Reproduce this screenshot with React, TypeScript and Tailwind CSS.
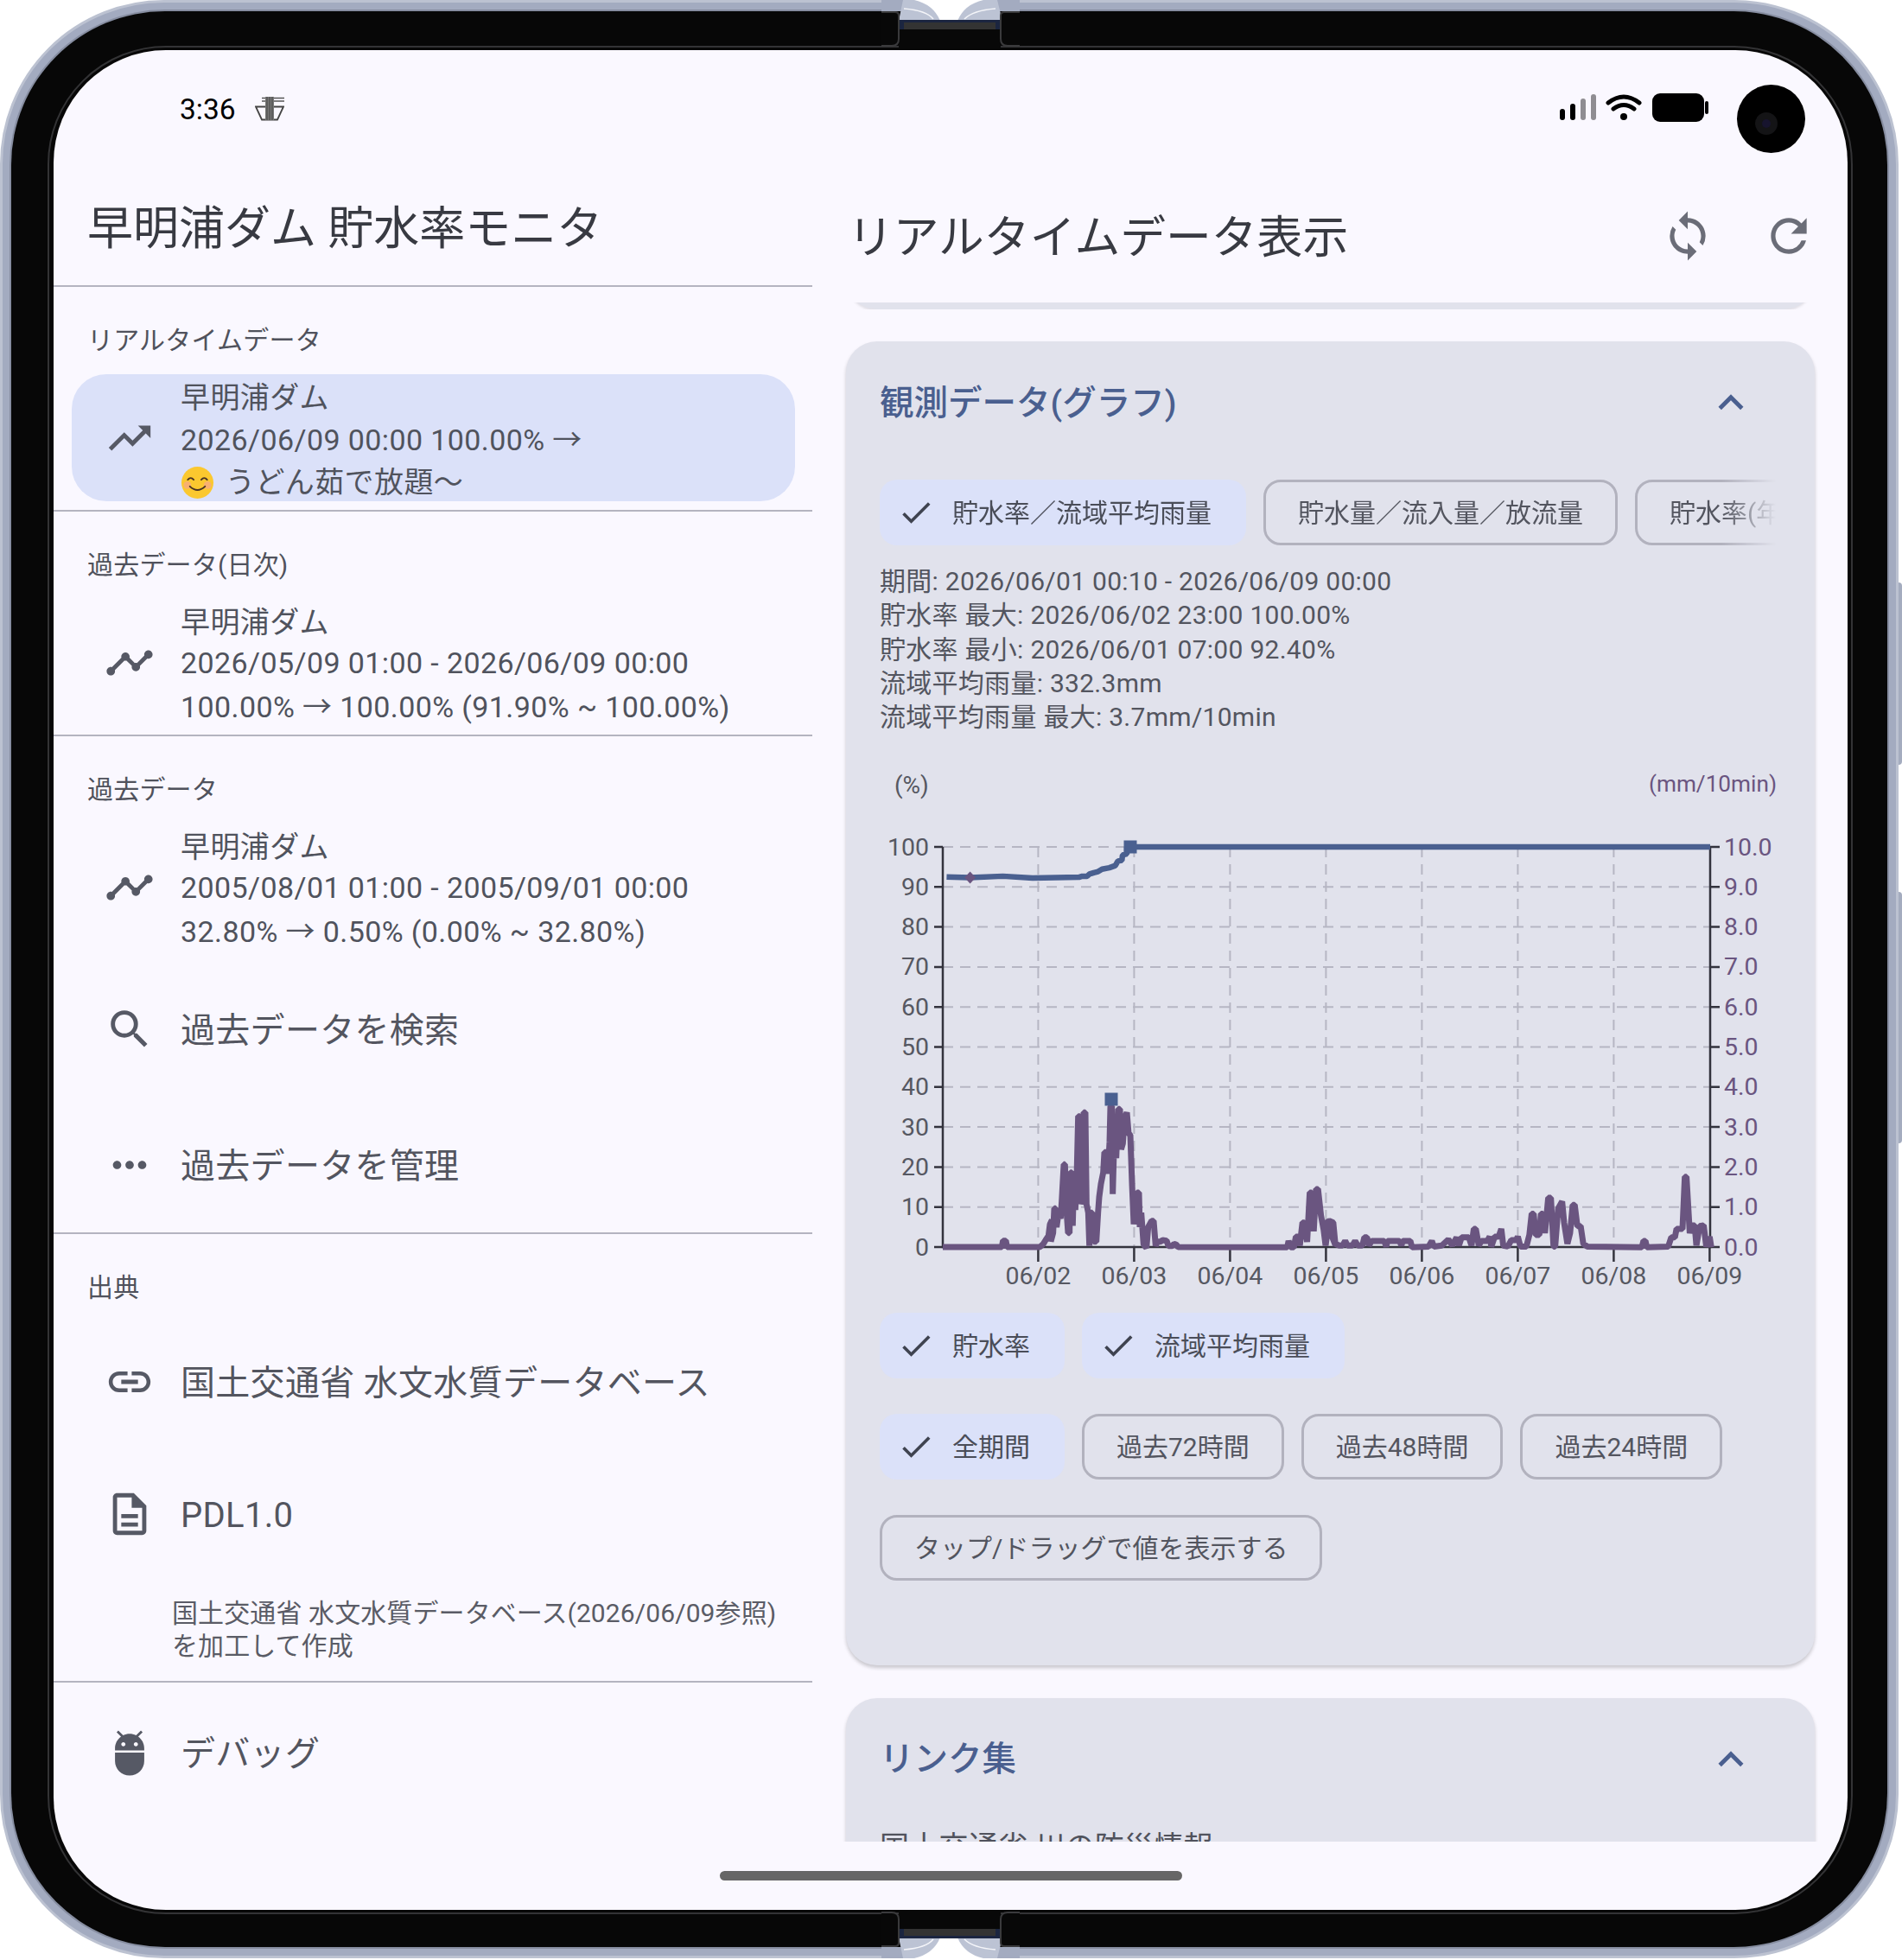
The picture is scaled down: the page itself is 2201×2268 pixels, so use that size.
import type { ReactNode } from "react";
import {
  MdAdb,
  MdCheck,
  MdKeyboardArrowUp,
  MdLink,
  MdMoreHoriz,
  MdOutlineDescription,
  MdRefresh,
  MdSearch,
  MdSync,
  MdTimeline,
  MdTrendingUp,
} from "react-icons/md";

// traced from the chart, separate crops so separate scales
const rainA: number[][] = [
  [273, 639], [478, 639], [482, 617], [492, 617], [496, 639], [610, 639], [622, 628], [630, 615], [640, 600], [645, 560], [652, 545], [648, 620], [656, 590], [660, 505], [665, 505], [668, 570], [675, 520], [682, 540], [686, 480], [693, 352], [697, 352], [703, 520], [708, 590], [713, 590], [716, 380], [721, 380], [724, 565], [728, 405], [733, 510], [738, 400], [743, 185], [749, 185], [752, 490], [758, 470], [762, 172], [768, 172], [772, 490], [778, 520], [782, 635], [787, 520], [792, 520], [797, 620], [806, 620], [812, 520], [816, 465], [822, 420], [830, 380], [834, 310], [840, 310], [846, 385], [852, 275], [855, 150], [860, 150], [863, 455], [868, 270], [875, 330], [882, 160], [888, 160], [892, 300], [898, 280], [904, 190], [912, 172], [918, 245], [924, 250], [930, 420], [936, 560], [942, 480], [947, 450], [954, 450], [957, 570], [962, 520], [970, 630], [980, 642], [986, 570], [998, 548], [1005, 548], [1012, 635], [1018, 620], [1030, 620], [1036, 615], [1050, 617], [1056, 635], [1070, 635], [1076, 628], [1083, 630], [1090, 639],
];
const rainB: number[][] = [
  [1400, 1380], [1410, 1380], [1414, 1362], [1420, 1380], [1430, 1380], [1436, 1350], [1442, 1350], [1448, 1375], [1456, 1310], [1462, 1310], [1470, 1365], [1478, 1225], [1484, 1225], [1490, 1335], [1497, 1215], [1503, 1215], [1512, 1290], [1520, 1330], [1526, 1375], [1535, 1310], [1548, 1310], [1556, 1375],
];
const rainC: number[][] = [
  [92, 1310], [100, 1305], [112, 1310], [118, 1370], [130, 1375], [140, 1375], [148, 1362], [155, 1375], [170, 1375], [178, 1362], [186, 1375], [200, 1375], [206, 1352], [214, 1352], [220, 1375], [228, 1362], [266, 1362], [272, 1378], [276, 1362], [312, 1362], [318, 1375], [322, 1362], [345, 1362], [350, 1380], [400, 1378], [410, 1362], [416, 1378], [440, 1375], [460, 1358], [472, 1375], [485, 1352], [492, 1375], [500, 1352], [522, 1352], [530, 1375], [537, 1328], [543, 1328], [552, 1375], [560, 1362], [578, 1362], [585, 1350], [590, 1378], [600, 1350], [612, 1350], [620, 1328], [626, 1375], [640, 1378], [650, 1360], [665, 1360], [670, 1350], [678, 1378], [696, 1378], [705, 1345], [712, 1285], [718, 1285], [724, 1345], [735, 1345], [740, 1285], [746, 1285], [752, 1340], [762, 1240], [770, 1240], [778, 1378], [783, 1378], [792, 1270], [804, 1250], [810, 1310], [820, 1370], [828, 1340], [836, 1260], [842, 1260], [850, 1320], [860, 1320], [868, 1370], [880, 1378], [1045, 1380], [1050, 1362], [1056, 1362], [1060, 1380], [1125, 1378], [1134, 1352], [1145, 1352], [1150, 1328], [1168, 1328], [1175, 1180], [1180, 1180], [1190, 1340], [1195, 1318], [1205, 1318], [1210, 1375], [1220, 1320], [1232, 1318], [1240, 1378], [1250, 1350], [1255, 1380],
];
const level: number[][] = [
  [380, 330], [450, 332], [550, 328], [640, 333], [780, 331], [790, 328], [805, 328], [812, 322], [825, 318], [838, 315], [850, 308], [872, 304], [890, 298], [898, 285], [910, 283], [912, 268], [925, 265], [925, 245], [935, 245],
];

const rainPoints = [
  ...rainA.map(([x, y]) => `${1000 + x / 3},${1230 + y / 3}`),
  ...rainB.map(([x, y]) => `${950 + x / 2.613},${880 + y / 2.45}`),
  ...rainC.map(([x, y]) => `${1500 + x / 2.613},${880 + y / 2.45}`),
].join(" ");
const levelPoints = [...level.map(([x, y]) => `${950 + x / 2.613},${880 + y / 2.45}`), "1979,980"].join(" ");

const tickY = Array.from({ length: 11 }, (_, i) => 1443 - i * 46.3);
const tickX = Array.from({ length: 8 }, (_, i) => 1201.4 + i * 111);
const dayLabels = ["06/02", "06/03", "06/04", "06/05", "06/06", "06/07", "06/08", "06/09"];

const Chart = () => (
  <svg viewBox="1000 880 1080 620" className="block w-[1080px] h-[620px] mt-[31px] -ml-[18px]">
    {tickY.slice(1).map((y) => (
      <line key={y} x1="1091" x2="1979" y1={y} y2={y} stroke="#b6b6c3" strokeWidth="2" strokeDasharray="12 8" />
    ))}
    {tickX.slice(0, 7).map((x) => (
      <line key={x} x1={x} x2={x} y1="980" y2="1443" stroke="#b6b6c3" strokeWidth="2" strokeDasharray="12 8" />
    ))}
    <path d="M1091 980V1443H1979V980" fill="none" stroke="#33333d" strokeWidth="2.5" />
    {tickY.map((y) => (
      <path key={y} d={`M1081 ${y}H1091M1979 ${y}H1990`} stroke="#33333d" strokeWidth="2.5" />
    ))}
    {tickX.map((x) => (
      <line key={x} x1={x} x2={x} y1="1443" y2="1460" stroke="#33333d" strokeWidth="2.5" />
    ))}
    <polyline points={rainPoints} fill="none" stroke="#6a5580" strokeWidth="7" strokeLinejoin="bevel" />
    <polyline points={levelPoints} fill="none" stroke="#4a6090" strokeWidth="6.5" strokeLinejoin="bevel" />
    <rect x="1300.5" y="972.5" width="15" height="15" fill="#4a6090" />
    <rect x="1278.5" y="1264.5" width="15" height="15" fill="#4a6090" />
    <path d="M1122.6 1008.5l6.5 7-6.5 7-6.5-7z" fill="#6a5580" />

    {tickY.map((y, i) => (
      <text key={y} x="1075" y={y} textAnchor="end" dominantBaseline="central" className="text-[28.5px] fill-[#565862]">
        {i * 10}
      </text>
    ))}
    {tickY.map((y, i) => (
      <text key={y} x="1995" y={y} dominantBaseline="central" className="text-[28.5px] fill-[#6a5580]">
        {i === 10 ? "10.0" : `${i}.0`}
      </text>
    ))}
    {tickX.map((x, i) => (
      <text key={x} x={x} y="1476" textAnchor="middle" dominantBaseline="central" className="text-[28.5px] fill-[#565862]">
        {dayLabels[i]}
      </text>
    ))}
    <text x="1035" y="908" dominantBaseline="central" className="text-[28px] fill-[#565862]">(%)</text>
    <text x="2056" y="907" textAnchor="end" dominantBaseline="central" className="text-[26.2px] fill-[#6a5580]">(mm/10min)</text>
  </svg>
);

const Chip = ({ label, on }: { label: string; on?: boolean }) =>
  on ? (
    <div className="h-[76px] shrink-0 flex items-center gap-[20px] pl-[20px] pr-[40px] rounded-[20px] bg-[#dbe1f9] text-[30px] text-[#4a4d58] whitespace-nowrap">
      <MdCheck className="w-[44px] h-[44px] text-[#3f4350]" />
      {label}
    </div>
  ) : (
    <div className="h-[76px] shrink-0 flex items-center px-[37px] rounded-[20px] border-[3px] border-[#b2b2be] text-[30px] text-[#53555f] whitespace-nowrap">
      {label}
    </div>
  );

const Divider = () => <div className="h-[2px] bg-[#b4b4c0]" />;

const SectionLabel = ({ children }: { children: ReactNode }) => (
  <div className="h-[101px] pt-[22px] pl-[39px] flex items-center text-[30px] tracking-[0.2px] text-[#50525c]">{children}</div>
);

const DataItem = ({ icon, active, lines }: { icon: ReactNode; active?: boolean; lines: ReactNode[] }) => (
  <div className={`h-[147px] ml-[21px] mr-[20px] flex items-center rounded-[40px] pl-[38px] ${active ? "bg-[#dbe1f9]" : ""}`}>
    <div className="w-[58px] h-[58px] text-[#565965] shrink-0">{icon}</div>
    <div className="ml-[30px] pt-[5px] text-[34px] leading-[49px] tracking-[0.4px] text-[#50535d] whitespace-nowrap">
      {lines.map((l, i) => (
        <div key={i} className={!active && i === 1 ? "-mt-[2px] mb-[2px]" : ""}>{l}</div>
      ))}
    </div>
  </div>
);

const BigItem = ({ icon, label, h }: { icon: ReactNode; label: string; h: string }) => (
  <div className={`${h} flex items-center pl-[59px]`}>
    <div className="w-[58px] h-[58px] text-[#565965] shrink-0">{icon}</div>
    <div className="ml-[30px] pt-[4px] text-[40px] tracking-[0.3px] text-[#53555f] whitespace-nowrap">{label}</div>
  </div>
);

const Smile = () => (
  <svg viewBox="0 0 40 40" className="w-[39px] h-[39px] shrink-0">
    <circle cx="20" cy="20" r="19" fill="#fbc82f" />
    <circle cx="8" cy="23" r="4.5" fill="#f6a58a" opacity="0.7" />
    <circle cx="32" cy="23" r="4.5" fill="#f6a58a" opacity="0.7" />
    <path d="M8.5 16.5q3.5-4 7 0M24.5 16.5q3.5-4 7 0" fill="none" stroke="#4a3424" strokeWidth="2" strokeLinecap="round" />
    <path d="M11 24.5q9 8.5 18 0" fill="none" stroke="#4a3424" strokeWidth="2" strokeLinecap="round" />
  </svg>
);

const LeftPane = () => (
  <div className="w-[878px] shrink-0">
    <div className="h-[138px] pl-[39px] pt-[10px] flex items-center text-[53px] text-[#383a42] whitespace-nowrap">早明浦ダム 貯水率モニタ</div>
    <Divider />
    <SectionLabel>リアルタイムデータ</SectionLabel>
    <DataItem
      active
      icon={<MdTrendingUp className="w-full h-full" />}
      lines={[
        "早明浦ダム",
        "2026/06/09 00:00 100.00% →",
        <span className="flex items-center gap-[13px]"><Smile />うどん茹で放題〜</span>,
      ]}
    />
    <div className="h-[10px]" />
    <Divider />
    <SectionLabel>過去データ(日次)</SectionLabel>
    <DataItem
      icon={<MdTimeline className="w-full h-full" />}
      lines={["早明浦ダム", "2026/05/09 01:00 - 2026/06/09 00:00", "100.00% → 100.00% (91.90% ~ 100.00%)"]}
    />
    <div className="h-[10px]" />
    <Divider />
    <SectionLabel>過去データ</SectionLabel>
    <DataItem
      icon={<MdTimeline className="w-full h-full" />}
      lines={["早明浦ダム", "2005/08/01 01:00 - 2005/09/01 00:00", "32.80% → 0.50% (0.00% ~ 32.80%)"]}
    />
    <div className="h-[12px]" />
    <BigItem h="h-[157px]" icon={<MdSearch className="w-full h-full" />} label="過去データを検索" />
    <BigItem h="h-[157px]" icon={<MdMoreHoriz className="w-full h-full" />} label="過去データを管理" />
    <Divider />
    <SectionLabel>出典</SectionLabel>
    <BigItem h="h-[139px]" icon={<MdLink className="w-full h-full" />} label="国土交通省 水文水質データベース" />
    <BigItem h="h-[167px]" icon={<MdOutlineDescription className="w-full h-full" />} label="PDL1.0" />
    <div className="pl-[137px] pt-[13px] h-[110px] text-[30px] tracking-[0.1px] leading-[38px] text-[#5a5c66] whitespace-nowrap">
      国土交通省 水文水質データベース(2026/06/09参照)
      <br />
      を加工して作成
    </div>
    <Divider />
    <BigItem h="h-[158px] pt-[3px]" icon={<MdAdb className="w-full h-full" />} label="デバッグ" />
  </div>
);

const RightPane = () => (
  <div className="flex-1 min-w-0">
    <div className="h-[158px] pt-[9px] pl-[41px] pr-[37px] flex items-center">
      <div className="flex-1 text-[52.8px] text-[#383a42] whitespace-nowrap">リアルタイムデータ表示</div>
      <MdSync className="w-[62px] h-[62px] -mt-[6px] text-[#6b6d78]" />
      <MdRefresh className="w-[62px] h-[62px] -mt-[6px] ml-[55px] text-[#6b6d78]" />
    </div>
    <div className="h-[1781px] overflow-hidden">
      <div className="h-[8px] overflow-hidden pl-[39px] pr-[38px]">
        <div className="h-[100px] -mt-[92px] rounded-[36px] bg-[#e1e2ec] shadow-[0_2px_3px_rgba(0,0,0,0.1)]" />
      </div>
      <div className="h-[37px]" />
      <div className="ml-[39px] mr-[38px] h-[1532px] px-[39px] rounded-[36px] bg-[#e1e2ec] shadow-[0_3px_4px_rgba(0,0,0,0.2)]">
        <div className="h-[144px] flex items-center text-[39.5px] font-medium text-[#4a5f8f]">
          <span className="flex-1">観測データ(グラフ)</span>
          <MdKeyboardArrowUp className="w-[58px] h-[58px] mr-[29px] -mt-[2px]" />
        </div>
        <div className="h-[16px]" />
        <div className="w-[1037px] flex gap-[20px] overflow-hidden [mask-image:linear-gradient(to_right,black_94%,transparent)]">
          <Chip on label="貯水率／流域平均雨量" />
          <Chip label="貯水量／流入量／放流量" />
          <Chip label="貯水率(年間)" />
        </div>
        <div className="mt-[22px] text-[30px] tracking-[0.28px] leading-[39.3px] text-[#53555f] whitespace-nowrap">
          <div>期間: 2026/06/01 00:10 - 2026/06/09 00:00</div>
          <div>貯水率 最大: 2026/06/02 23:00 100.00%</div>
          <div>貯水率 最小: 2026/06/01 07:00 92.40%</div>
          <div>流域平均雨量: 332.3mm</div>
          <div>流域平均雨量 最大: 3.7mm/10min</div>
        </div>
        <Chart />
        <div className="mt-[19px] flex gap-[20px]">
          <Chip on label="貯水率" />
          <Chip on label="流域平均雨量" />
        </div>
        <div className="mt-[41px] flex gap-[20px]">
          <Chip on label="全期間" />
          <Chip label="過去72時間" />
          <Chip label="過去48時間" />
          <Chip label="過去24時間" />
        </div>
        <div className="mt-[41px] flex">
          <Chip label="タップ/ドラッグで値を表示する" />
        </div>
      </div>
      <div className="ml-[39px] mr-[38px] mt-[38px] h-[400px] px-[39px] rounded-[36px] bg-[#e1e2ec] shadow-[0_3px_4px_rgba(0,0,0,0.2)]">
        <div className="h-[142px] flex items-center text-[39.5px] font-medium text-[#4a5f8f]">
          <span className="flex-1">リンク集</span>
          <MdKeyboardArrowUp className="w-[58px] h-[58px] mr-[29px]" />
        </div>
        <div className="mt-[6px] text-[34px] tracking-[0.3px] leading-[48px] text-[#50525c]">国土交通省 川の防災情報</div>
      </div>
    </div>
  </div>
);

const StatusBar = () => (
  <div className="h-[134px] pl-[146px] pr-[161px] flex items-center">
    <span className="text-[33.5px] pt-[4px] text-black">3:36</span>
    <svg viewBox="0 0 34 28" className="w-[34px] h-[28px] ml-[22px] mt-[1px]">
      <path d="M8 1.5H34M8 5H34" stroke="#555" strokeWidth="1.5" fill="none" />
      <path d="M1 11.5H33L26 26.5H8Z" fill="none" stroke="#444" strokeWidth="1.8" />
      <rect x="12" y="0" width="10" height="27" fill="#777" />
      <path d="M14 0V27M17 0V27M20 0V27" stroke="#444" strokeWidth="1" />
    </svg>
    <svg viewBox="0 0 172 34" className="ml-auto w-[172px] h-[34px]">
      <rect x="0" y="18" width="6" height="13" rx="3" fill="#000" />
      <rect x="12" y="12" width="6" height="19" rx="3" fill="#000" />
      <rect x="24" y="6" width="6" height="25" rx="3" fill="#8f8d92" />
      <rect x="36" y="1" width="6" height="30" rx="3" fill="#8f8d92" />
      <path d="M56 11q18-14 36 0M62 18q12-9 24 0" fill="none" stroke="#000" strokeWidth="5" strokeLinecap="round" />
      <circle cx="74" cy="27" r="4" fill="#000" />
      <rect x="107" y="0" width="60" height="33" rx="9" fill="#000" />
      <rect x="168" y="9" width="4" height="15" rx="2" fill="#000" />
    </svg>
  </div>
);

const Hinge = ({ className }: { className: string }) => (
  <svg viewBox="0 0 160 70" className={`absolute left-[1020px] w-[160px] h-[70px] ${className}`}>
    <rect x="0" y="0" width="160" height="13" fill="#a3abc0" />
    <path d="M25 0H134L140 24H20Z" fill="#bcc3d4" />
    <path d="M38 0Q60 5 68 24H88Q96 5 118 0Z" fill="#fff" />
    <rect x="20" y="24" width="118" height="32" fill="#080808" />
    <rect x="20" y="23" width="118" height="11" fill="#1b2540" />
    <rect x="26" y="26" width="106" height="8" fill="#333" />
    <path d="M0 53H12Q20 53 20 45V18Q20 14 16 14H0M160 53H146Q138 53 138 45V18Q138 14 142 14H160" fill="#080808" stroke="#3a3a3c" strokeWidth="2" />
    <path d="M26 10Q52 12 60 22M132 10Q106 12 96 22" fill="none" stroke="#f4f5f9" strokeWidth="1.5" />
  </svg>
);

export default function App() {
  return (
    <div className="relative w-[2201px] h-[2268px] overflow-hidden bg-white font-['Roboto','Noto_Sans_CJK_JP',sans-serif]">
      <div className="absolute right-0 top-[674px] w-[6px] h-[211px] rounded-r-[4px] bg-[#a4acbf]" />
      <div className="absolute right-0 top-[1032px] w-[6px] h-[291px] rounded-r-[4px] bg-[#a4acbf]" />
      <div className="relative w-[2197px] h-[2266px] rounded-[190px] border-[3px] border-[#bcc2d1] bg-[#a3abc0] p-[10px]">
        <div className="rounded-[178px] bg-[#070707] pt-[40px] pl-[42px] pr-[40px] pb-[38px] shadow-[0_0_0_2px_#868da0]">
          <div className="rounded-[137px] border-2 border-[#333335] pt-[3px] pl-[5px] pr-[4px] pb-[3px]">
            <div className="relative w-[2076px] h-[2152px] rounded-[130px] bg-[#faf8ff] overflow-hidden">
              <StatusBar />
              <div className="flex">
                <LeftPane />
                <RightPane />
              </div>
              <div className="absolute left-[771px] top-[2107px] w-[535px] h-[11px] rounded-full bg-[#666]" />
              <div className="absolute left-[1948px] top-[40px] w-[79px] h-[79px] rounded-full bg-black flex items-center justify-center">
                <div className="w-[26px] h-[26px] -ml-[12px] mt-[10px] rounded-full bg-[#141416] flex items-center justify-center">
                  <div className="w-[10px] h-[10px] rounded-full bg-[#17142e]" />
                </div>
              </div>
            </div>
          </div>
        </div>
        <Hinge className="-top-[3px] -ml-[3px]" />
        <Hinge className="-bottom-[3px] -ml-[3px] -scale-y-100" />
      </div>
    </div>
  );
}
